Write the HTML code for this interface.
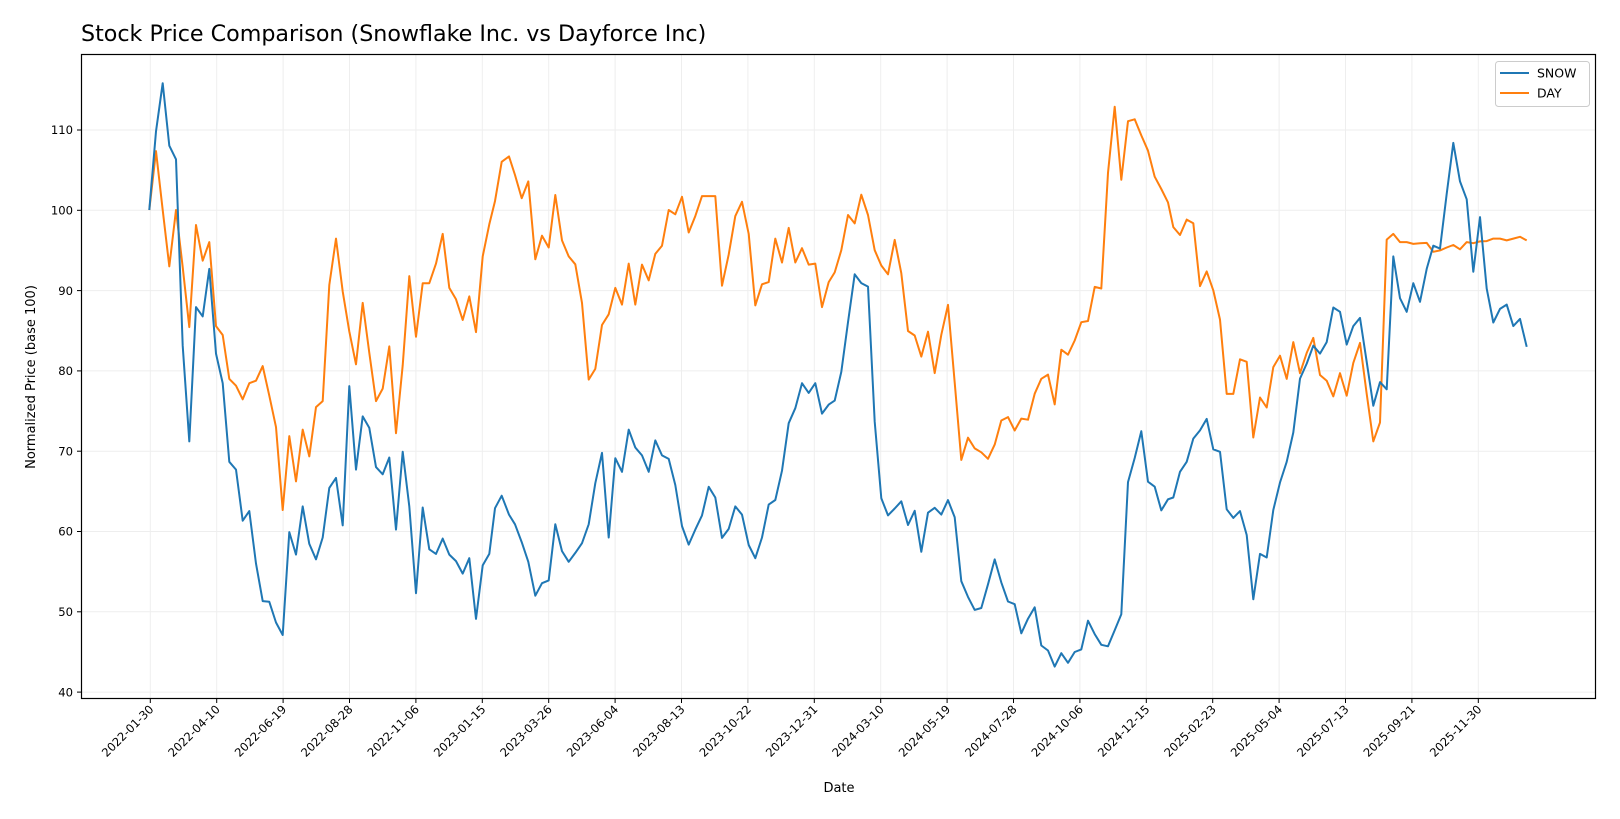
<!DOCTYPE html>
<html><head><meta charset="utf-8"><style>
html,body{margin:0;padding:0;background:#fff;}
svg{display:block;font-family:"DejaVu Sans","Liberation Sans",sans-serif;}
</style></head><body>
<svg id="s" width="1620" height="819" viewBox="0 0 1620 819" xmlns="http://www.w3.org/2000/svg">
<rect width="1620" height="819" fill="#fff"/>
<g id="grid" stroke="#ebebeb" stroke-width="1" opacity="0.8"></g>
<g id="ticks" stroke="#000" stroke-width="1"></g>
<g id="labels" font-size="11.6" fill="#000"></g>
<polyline id="day" fill="none" stroke="#ff7f0e" stroke-width="2" stroke-linejoin="round"/>
<polyline id="snow" fill="none" stroke="#1f77b4" stroke-width="2" stroke-linejoin="round"/>
<rect x="81.5" y="54.5" width="1514" height="644" fill="none" stroke="#000" stroke-width="1.2"/>
<text x="81" y="41" font-size="22.2" fill="#000">Stock Price Comparison (Snowflake Inc. vs Dayforce Inc)</text>
<text x="839" y="792" font-size="13" text-anchor="middle">Date</text>
<text transform="translate(35,377) rotate(-90)" font-size="13" text-anchor="middle">Normalized Price (base 100)</text>
<rect x="1495.5" y="61.5" width="94" height="45" rx="3" fill="#fff" fill-opacity="0.8" stroke="#ccc"/>
<line x1="1500" y1="73" x2="1529" y2="73" stroke="#1f77b4" stroke-width="2"/>
<line x1="1500" y1="93" x2="1529" y2="93" stroke="#ff7f0e" stroke-width="2"/>
<text x="1537" y="77.5" font-size="12.5">SNOW</text>
<text x="1537" y="97.5" font-size="12.5">DAY</text>
</svg>
<script>
var NS="http://www.w3.org/2000/svg";
function el(t,a,p,txt){var e=document.createElementNS(NS,t);for(var k in a)e.setAttribute(k,a[k]);if(txt)e.textContent=txt;document.getElementById(p).appendChild(e);return e;}
var dates=["2022-01-30","2022-04-10","2022-06-19","2022-08-28","2022-11-06","2023-01-15","2023-03-26","2023-06-04","2023-08-13","2023-10-22","2023-12-31","2024-03-10","2024-05-19","2024-07-28","2024-10-06","2024-12-15","2025-02-23","2025-05-04","2025-07-13","2025-09-21","2025-11-30"];
dates.forEach(function(d,i){var x=150.3+66.4*i;
el("line",{x1:x,y1:55,x2:x,y2:698},"grid");
el("line",{x1:x,y1:698,x2:x,y2:703},"ticks");
el("text",{x:0,y:0,"text-anchor":"end",transform:"translate("+(x+4)+",710) rotate(-45)"},"labels",d);});
for(var v=40;v<=110;v+=10){var y=130+(110-v)*8.03;
el("line",{x1:82,y1:y,x2:1595,y2:y},"grid");
el("line",{x1:77,y1:y,x2:81.5,y2:y},"ticks");
el("text",{x:73,y:y+4.2,"text-anchor":"end"},"labels",String(v));}
function seg(arr,x0,y0,sx,sy){return arr.map(function(p){return [x0+p[0]/sx,y0+p[1]/sy];});}
function join(segs){var out=[];segs.forEach(function(s){s.forEach(function(p){if(!out.length||p[0]>out[out.length-1][0]+2)out.push(p);});});return out.map(function(p){return p[0].toFixed(1)+","+p[1].toFixed(1);}).join(" ");}
var b1=[[58,420],[78,200],[98,65],[118,240],[138,278],[158,800],[178,1068],[198,692],[218,718],[238,585],[258,822],[278,905],[298,1125],[318,1147],[338,1290],[358,1263],[378,1410],[398,1515],[418,1517],[438,1575],[458,1610],[478,1322],[498,1385],[518,1250],[538,1355],[558,1398],[578,1337],[598,1198],[618,1170],[638,1303],[658,913],[678,1147],[698,998],[718,1030],[738,1140],[758,1160],[778,1113],[798,1315],[818,1097],[838,1250],[858,1493],[878,1253],[898,1370],[918,1383],[938,1340],[958,1385],[978,1403],[998,1438],[1018,1395],[1038,1565],[1058,1415],[1078,1383]];
var b2=[[0,1400],[16,1565],[37,1417],[55,1385],[75,1255],[95,1220],[117,1273],[135,1300],[155,1350],[175,1405],[196,1500],[216,1465],[236,1457],[256,1300],[276,1375],[296,1405],[316,1380],[336,1353],[356,1300],[376,1185],[396,1100],[416,1337],[436,1115],[456,1153],[476,1035],[496,1085],[516,1107],[536,1153],[556,1065],[576,1107],[596,1117],[616,1190],[636,1305],[656,1357],[676,1315],[696,1275],[716,1195],[736,1225],[756,1338],[776,1313],[796,1250],[816,1273],[836,1358],[856,1395],[876,1337],[896,1245],[916,1232],[936,1150],[956,1017],[976,975],[996,905],[1016,932],[1036,905],[1056,990],[1076,965]];
var b3=[[0,862],[14,843],[34,925],[54,905],[74,890],[94,815],[114,685],[134,560],[154,583],[174,592],[194,945],[214,1145],[234,1190],[254,1172],[274,1153],[294,1215],[314,1178],[334,1285],[354,1183],[374,1170],[394,1188],[414,1150],[434,1195],[454,1362],[474,1403],[494,1437],[514,1432],[534,1370],[554,1305],[574,1365],[594,1415],[614,1422],[634,1498],[654,1460],[674,1430],[694,1530],[714,1543],[734,1585],[754,1550],[774,1575],[794,1547],[814,1540],[834,1465],[854,1500],[874,1528],[894,1532],[914,1490],[934,1448],[954,1103],[974,1040],[994,970],[1014,1102],[1034,1115],[1054,1177],[1074,1148]];
var b4=[[0,1187],[10,1195],[30,1260],[50,1228],[70,1225],[90,1153],[110,1125],[130,1060],[150,1037],[170,1005],[190,1090],[210,1097],[230,1258],[250,1282],[270,1263],[290,1330],[310,1510],[330,1383],[350,1393],[370,1260],[390,1183],[410,1125],[430,1043],[450,892],[470,850],[490,800],[510,822],[530,790],[550,693],[570,705],[590,797],[610,745],[630,722],[650,845],[670,968],[690,902],[710,922],[730,550],[750,667],[770,705],[790,625],[810,677],[830,585],[850,520],[870,528],[890,375],[910,232],[930,340],[950,390],[970,593],[990,440],[1010,640],[1030,735],[1050,697],[1070,685],[1090,745],[1110,725],[1130,803]];
var o1=[[58,420],[78,255],[98,420],[118,578],[138,420],[158,580],[178,748],[198,462],[218,562],[238,510],[258,745],[278,770],[298,893],[318,912],[338,950],[358,905],[378,898],[398,857],[418,940],[438,1028],[458,1260],[478,1053],[498,1180],[518,1035],[538,1110],[558,972],[578,955],[598,630],[618,500],[638,648],[658,760],[678,852],[698,680],[718,820],[738,955],[758,920],[778,802],[798,1045],[818,855],[838,605],[858,775],[878,625],[898,625],[918,570],[938,487],[958,638],[978,670],[998,728],[1018,662],[1038,762],[1058,550],[1078,460]];
var o2=[[0,668],[16,762],[37,550],[55,487],[75,395],[95,285],[117,270],[135,322],[155,387],[175,340],[196,558],[216,492],[236,525],[256,378],[276,505],[296,550],[316,572],[336,680],[356,895],[376,865],[396,742],[416,712],[436,638],[456,685],[476,570],[496,685],[516,573],[536,617],[556,543],[576,520],[596,420],[616,432],[636,383],[656,483],[676,437],[696,381],[716,381],[736,381],[756,632],[776,545],[796,437],[816,397],[836,487],[856,687],[876,628],[896,622],[916,500],[936,567],[956,470],[976,567],[996,527],[1016,573],[1036,570],[1056,692],[1076,622]];
var o3=[[0,535],[14,532],[34,647],[54,583],[74,555],[94,497],[114,405],[134,427],[154,352],[174,405],[194,497],[214,537],[234,560],[254,470],[274,557],[294,708],[314,720],[334,775],[354,710],[374,818],[394,718],[414,640],[434,843],[454,1045],[474,987],[494,1015],[514,1025],[534,1042],[554,1005],[574,942],[594,933],[614,968],[634,937],[654,940],[674,872],[694,833],[714,822],[734,900],[754,757],[774,770],[794,733],[814,685],[834,682],[854,593],[874,597],[894,295],[914,122],[934,313],[954,160],[974,155],[994,197],[1014,237],[1034,305],[1054,337],[1074,372]];
var o4=[[0,278],[10,325],[30,362],[50,400],[70,468],[90,490],[110,447],[130,457],[150,633],[170,592],[190,645],[210,727],[230,935],[250,935],[270,838],[290,845],[310,1057],[330,945],[350,973],[370,860],[390,828],[410,893],[430,790],[450,877],[470,820],[490,778],[510,882],[530,898],[550,942],[570,877],[590,940],[610,848],[630,792],[650,935],[670,1068],[690,1015],[710,503],[730,487],[750,510],[770,510],[790,515],[810,513],[830,512],[850,537],[870,533],[890,525],[910,518],[930,530],[950,510],[970,513],[990,508],[1010,507],[1030,500],[1050,500],[1070,505],[1090,500],[1110,495],[1130,505]];
document.getElementById("snow").setAttribute("points",join([seg(b1,130,60,3,2.8),seg(b2,470,60,3,2.8),seg(b3,810,60,3,2.613),seg(b4,1150,60,3,2.8)]));
document.getElementById("day").setAttribute("points",join([seg(o1,130,60,3,2.8),seg(o2,470,60,3,2.8),seg(o3,810,60,3,2.613),seg(o4,1150,60,3,2.8)]));
</script>
</body></html>
